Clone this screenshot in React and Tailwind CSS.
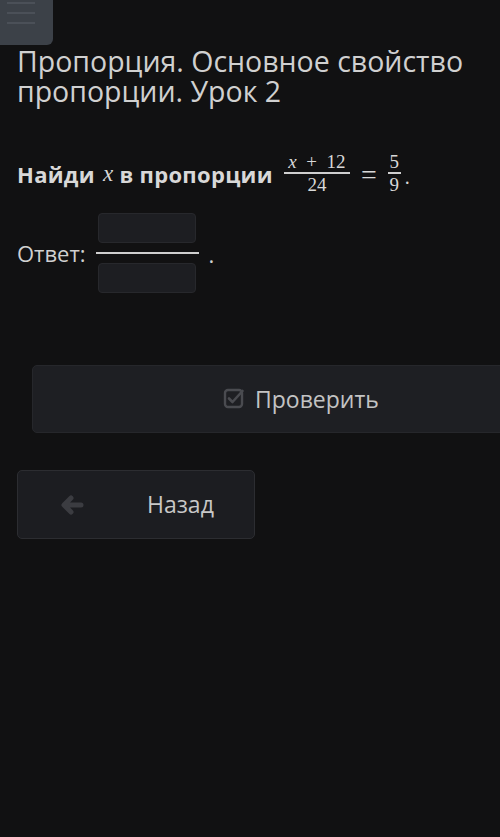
import React from "react";

const sans = { fontFamily: '"Open Sans", "Noto Sans", sans-serif' };
const serif = { fontFamily: '"Liberation Serif", "DejaVu Serif", serif' };

export default function App() {
  return (
    <div className="w-[500px] h-[837px] bg-[#111112] overflow-hidden text-[#d2d2d2]" style={sans}>
      <div className="w-[53px] h-[45px] bg-[#3c4148] rounded-br-[6px] flex flex-col gap-[8px] pt-[2px] pl-[7px]">
        <div className="w-[28px] h-[2px] bg-[#4b5058]" />
        <div className="w-[28px] h-[2px] bg-[#4b5058]" />
        <div className="w-[28px] h-[2px] bg-[#4b5058]" />
      </div>
      <div className="px-[17px]">
        <h1 className="text-[28.5px] leading-[30px] mt-[1px] text-[#d0d0d0] font-normal">
          Пропорция. Основное свойство пропорции. Урок 2
        </h1>
        <div className="mt-[46px] flex items-center text-[22px] font-bold text-[#d8d8d8] tracking-[0.3px]">
          <span>Найди</span>
          <span className="italic font-normal ml-[8px] mr-[6px] text-[23px]" style={serif}>x</span>
          <span>в пропорции</span>
          <span className="ml-[11px] font-normal inline-flex items-center tracking-normal">
            <span className="inline-flex flex-col items-center" style={serif}>
              <span className="text-[19px] leading-[20px] whitespace-pre"><i>x</i>  +  12</span>
              <span className="h-[2px] w-[66px] bg-[#cfcfcf]" />
              <span className="text-[19px] leading-[22px]">24</span>
            </span>
            <span className="text-[28px] mx-[11px] mt-[1px]" style={serif}>=</span>
            <span className="inline-flex flex-col items-center" style={serif}>
              <span className="text-[19px] leading-[20px]">5</span>
              <span className="h-[2px] w-[13px] bg-[#cfcfcf]" />
              <span className="text-[19px] leading-[22px]">9</span>
            </span>
            <span className="self-end mb-[4px] ml-[4px] text-[20px]" style={serif}>.</span>
          </span>
        </div>
        <div className="mt-[17px] flex items-center text-[22px] text-[#d0d0d0]">
          <span>Ответ:</span>
          <span className="ml-[10px] inline-flex flex-col items-center">
            <span className="w-[98px] h-[30px] rounded-[4px] bg-[#1d1e22] border border-[#27282c]" />
            <span className="w-[103px] h-[2px] bg-[#cfcfcf] my-[9px]" />
            <span className="w-[98px] h-[30px] rounded-[4px] bg-[#1d1e22] border border-[#27282c]" />
          </span>
          <span className="ml-[10px] mt-[2px]">.</span>
        </div>
      </div>
      <div className="ml-[32px] mt-[72px] w-[480px] h-[68px] rounded-[5px] bg-[#1e1f23] border border-[#26272b] flex items-center pl-[190px]">
        <svg width="22" height="22" viewBox="0 0 22 22" className="mr-[10px] mt-[-2px]">
          <rect x="2" y="3" width="17" height="17" rx="3" fill="none" stroke="#4a4b50" strokeWidth="2.4" />
          <path d="M6 11.5 L9.5 15 L19.5 4" fill="none" stroke="#4a4b50" strokeWidth="2.6" strokeLinecap="round" strokeLinejoin="round" />
        </svg>
        <span className="text-[23px] text-[#c3c3c3]">Проверить</span>
      </div>
      <div className="ml-[17px] mt-[37px] w-[238px] h-[69px] rounded-[5px] bg-[#1c1d21] border border-[#2c2d31] flex items-center">
        <svg width="24" height="20" viewBox="0 0 24 20" className="ml-[42px]">
          <path d="M11 3 L4 10 L11 17 M5 10 H21" fill="none" stroke="#3b3c41" strokeWidth="5" strokeLinecap="round" strokeLinejoin="round" />
        </svg>
        <span className="ml-[63px] text-[23px] text-[#c8c8c8]">Назад</span>
      </div>
    </div>
  );
}
